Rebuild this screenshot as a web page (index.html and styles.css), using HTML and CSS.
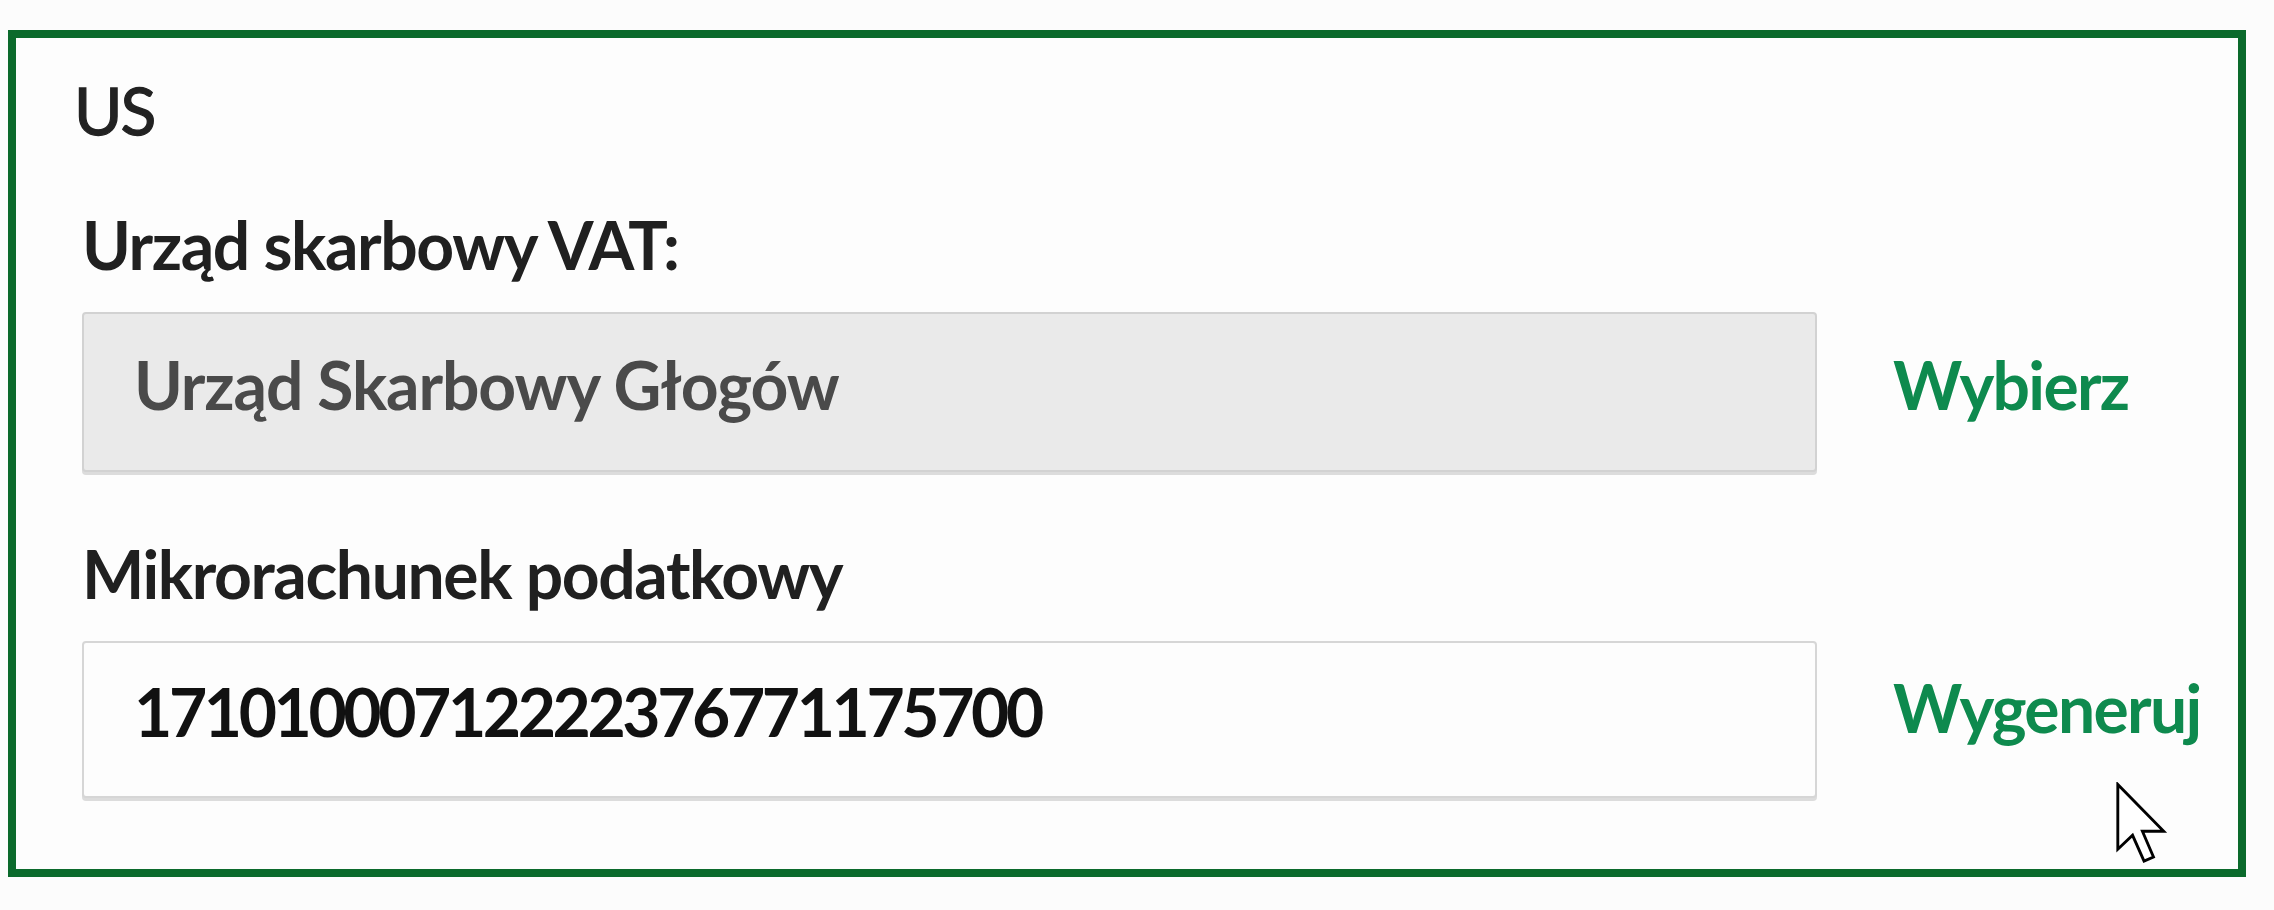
FILE: index.html
```html
<!DOCTYPE html>
<html lang="pl">
<head>
<meta charset="utf-8">
<title>US</title>
<link rel="stylesheet" href="styles.css">
</head>
<body>
<section class="panel">
  <h2 class="title">US</h2>
  <div class="field">
    <div class="label">Urząd skarbowy VAT:</div>
    <div class="row">
      <div class="input input-disabled">Urząd Skarbowy Głogów</div>
      <a class="action">Wybierz</a>
    </div>
  </div>
  <div class="field field-second">
    <div class="label">Mikrorachunek podatkowy</div>
    <div class="row">
      <div class="input input-value">17101000712222376771175700</div>
      <a class="action action-second">Wygeneruj</a>
    </div>
  </div>
  <svg class="cursor" viewBox="0 0 13 20" width="54" height="82" aria-hidden="true">
    <path d="M0.6 0.6 L0.6 16.4 L4.2 13 L7 19.3 L9.3 18.3 L6.6 12 L11.8 12 Z" fill="#ffffff" stroke="#000000" stroke-width="0.7" stroke-linejoin="miter"/>
  </svg>
</section>
</body>
</html>
```

FILE: styles.css
```css
html, body {
  margin: 0;
  padding: 0;
  background: #fcfcfc;
}

body {
  font-family: "Lato", "Open Sans", "Liberation Sans", sans-serif;
  color: #1f1f1f;
}

.panel {
  position: relative;
  box-sizing: border-box;
  margin: 30px 0 0 8px;
  width: 2238px;
  height: 847px;
  border: 8px solid #0b6a2c;
  padding: 32px 0 0 66px;
  background: #fdfdfd;
}

.title {
  margin: 0 0 0 -8px;
  font-size: 66px;
  line-height: 80px;
  font-weight: 400;
  letter-spacing: -2px;
  -webkit-text-stroke: 1.3px #222222;
  color: #222222;
}

.field {
  margin-top: 55px;
}

.field-second {
  margin-top: 62px;
}

.label {
  font-size: 66px;
  line-height: 80px;
  font-weight: 700;
  letter-spacing: -1.4px;
  color: #202020;
}

.row {
  display: flex;
  align-items: flex-start;
  gap: 76px;
  margin-top: 27px;
}

.input {
  box-sizing: border-box;
  flex: 0 0 1735px;
  width: 1735px;
  height: 160px;
  border: 2px solid #d6d6d6;
  border-radius: 4px;
  box-shadow: 0 3px 0 #dcdcdc;
  padding: 31px 0 0 50px;
  font-size: 66px;
  line-height: 80px;
  white-space: nowrap;
}

.input-disabled {
  background: #eaeaea;
  border-color: #d2d2d2;
  color: #4a4a4a;
  font-weight: 700;
  letter-spacing: -1.1px;
}

.input-value {
  height: 157px;
  background: #fdfdfd;
  color: #111111;
  font-weight: 700;
  padding-top: 29px;
  letter-spacing: -3.4px;
}

.action {
  flex: 0 0 auto;
  padding-top: 33px;
  font-size: 66px;
  line-height: 80px;
  font-weight: 700;
  letter-spacing: -1.7px;
  color: #0e8a4e;
  white-space: nowrap;
  cursor: pointer;
}

.action-second {
  padding-top: 27px;
}

.cursor {
  position: absolute;
  left: 2099px;
  top: 744px;
}
```
